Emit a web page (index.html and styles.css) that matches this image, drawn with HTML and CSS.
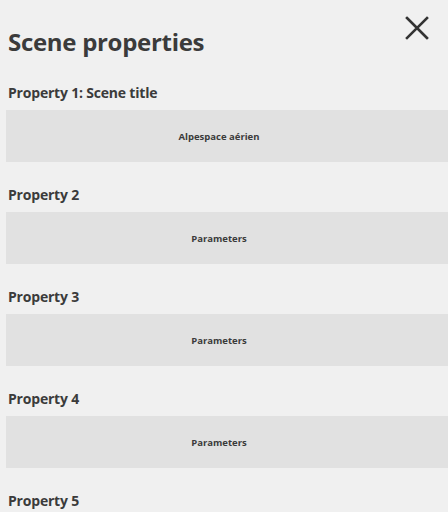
FILE: index.html
```html
<!DOCTYPE html>
<html>
<head>
<meta charset="utf-8">
<link rel="stylesheet" href="styles.css">
</head>
<body>
<div class="panel">
  <header class="head">
    <h1 class="title">Scene properties</h1>
    <button class="close" aria-label="Close">
      <svg width="24" height="24" viewBox="0 0 24 24"><path d="M2 2 L22 22 M22 2 L2 22" stroke="#333" stroke-width="2.6" fill="none" stroke-linecap="square"/></svg>
    </button>
  </header>
  <section class="prop">
    <h2 class="label">Property 1: Scene title</h2>
    <div class="field">Alpespace aérien</div>
  </section>
  <section class="prop">
    <h2 class="label">Property 2</h2>
    <div class="field">Parameters</div>
  </section>
  <section class="prop">
    <h2 class="label">Property 3</h2>
    <div class="field">Parameters</div>
  </section>
  <section class="prop">
    <h2 class="label">Property 4</h2>
    <div class="field">Parameters</div>
  </section>
  <section class="prop">
    <h2 class="label">Property 5</h2>
    <div class="field">Parameters</div>
  </section>
</div>
</body>
</html>
```
FILE: styles.css
```css
html, body {
  margin: 0;
  padding: 0;
  background: #f0f0f0;
  overflow: hidden;
}
body {
  font-family: "Open Sans", "DejaVu Sans", sans-serif;
  color: #3b3b3b;
}
.panel {
  width: 448px;
  height: 512px;
  overflow: hidden;
}
.head {
  display: flex;
  justify-content: space-between;
  align-items: flex-start;
  padding: 16px 19px 0 8px;
  height: 67px;
  box-sizing: border-box;
}
.title {
  margin: 0;
  margin-top: 9px;
  font-size: 24px;
  line-height: 34px;
  font-weight: 700;
  letter-spacing: -0.3px;
}
.close {
  border: 0;
  background: none;
  padding: 0;
  width: 24px;
  height: 24px;
}
.close svg { display: block; }
.prop {
  padding-top: 23px;
}
.prop:first-of-type {
  padding-top: 16px;
}
.label {
  margin: 0 0 7px 8px;
  font-size: 14px;
  line-height: 20px;
  font-weight: 700;
  letter-spacing: -0.2px;
}
.field {
  margin-left: 6px;
  width: 442px;
  height: 52px;
  box-sizing: border-box;
  padding-right: 16px;
  background: #e1e1e1;
  display: flex;
  align-items: center;
  justify-content: center;
  font-size: 9.5px;
  font-weight: 700;
}
```
